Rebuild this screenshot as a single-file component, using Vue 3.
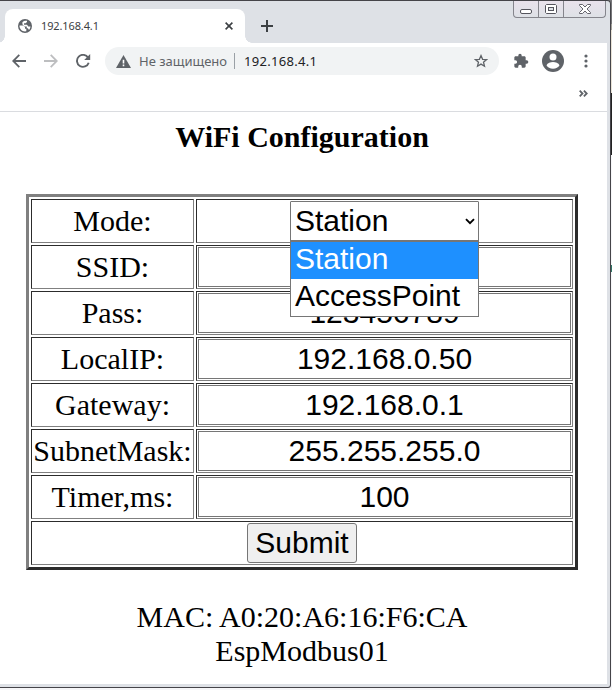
<script setup>
import { ref } from 'vue'

const fields = ref([
  { label: 'SSID:', value: '' },
  { label: 'Pass:', value: '123456789' },
  { label: 'LocalIP:', value: '192.168.0.50' },
  { label: 'Gateway:', value: '192.168.0.1' },
  { label: 'SubnetMask:', value: '255.255.255.0' },
  { label: 'Timer,ms:', value: '100' },
])
const modes = ['Station', 'AccessPoint']
const mode = ref('Station')
</script>

<template>
  <div class="screen">
    <div class="window">
      <div class="tabstrip">
        <div class="tab">
          <svg class="globe" width="14" height="14" viewBox="0 0 14 14">
            <circle cx="7" cy="7" r="7" fill="#5f6368" />
            <path d="M1.500 6.500H5.200L7 8.300V9.800H8.300V12.300C4.600 13 1.300 10.300 1.500 6.500Z M9 1.800V3L7.600 4.200H6V5.800H9L10.300 7.500H12.500C12.300 9 11.800 10 11 10.900L9.900 9.200H8.800V7.400H6.500L4.400 5.200V3.200C5.500 1.800 7.300 1.400 9 1.800Z" fill="#fff" />
          </svg>
          <span class="tab-title">192.168.4.1</span>
          <svg class="tab-close" width="8" height="8" viewBox="0 0 8 8"><path d="M.6.6L7.400 7.400M7.400.6L.6 7.400" stroke="#3c4043" stroke-width="1.600" /></svg>
        </div>
        <svg class="new-tab" width="12" height="12" viewBox="0 0 12 12"><path d="M6 0V12M0 6H12" stroke="#3c4043" stroke-width="2" /></svg>
        <div class="controls">
          <div class="control"><svg width="12" height="5"><rect x=".5" y=".5" width="11" height="4" rx="1.500" fill="#fff" stroke="#55555d" /></svg></div>
          <div class="control"><svg width="12" height="10"><path d="M1.500.5H10.500L11.500 1.500V8.500L10.500 9.500H1.500L.5 8.500V1.500Z" fill="#fff" stroke="#55555d" /><rect x="3.500" y="3.500" width="5" height="3" fill="#dee1e6" stroke="#55555d" /></svg></div>
          <div class="control wide"><svg width="12" height="10"><path d="M.5.5H3.500L6 3L8.500.5H11.500V1.500L8 5L11.500 8.500V9.500H8.500L6 7L3.500 9.500H.5V8.500L4 5L.5 1.500Z" fill="#fff" stroke="#55555d" stroke-width=".9" /></svg></div>
        </div>
      </div>

      <div class="toolbar">
        <svg class="back" width="14" height="14" viewBox="0 0 14 14"><path d="M14 7H1.500M7.300.9L1.200 7L7.300 13.100" fill="none" stroke="#5f6368" stroke-width="1.800" /></svg>
        <svg class="forward" width="14" height="14" viewBox="0 0 14 14"><path d="M0 7H12.500M6.700.9L12.800 7L6.700 13.100" fill="none" stroke="#bdbec0" stroke-width="1.800" /></svg>
        <svg class="reload" width="15" height="14" viewBox="0 0 15 14"><path d="M12.100 3.700A6 6 0 1 0 12.700 8.700" fill="none" stroke="#5f6368" stroke-width="1.900" /><path d="M14.200 0V6H8.200Z" fill="#5f6368" /></svg>
        <div class="omnibox">
          <svg class="warn" width="15" height="13" viewBox="0 0 15 13"><path d="M7.500 0L15 13H0Z" fill="#5f6368" /><path d="M7.500 4.800V8.500M7.500 9.500V11.200" stroke="#fff" stroke-width="1.600" /></svg>
          <span class="insecure">Не защищено</span>
          <i class="separator"></i>
          <span class="address">192.168.4.1</span>
          <svg class="star" width="14" height="14" viewBox="0 0 14 14"><path d="M7 1.600L8.600 5.300L12.600 5.600L9.500 8.200L10.500 12.200L7 10.100L3.500 12.200L4.500 8.200L1.400 5.600L5.400 5.300Z" fill="none" stroke="#5f6368" stroke-width="1.300" /></svg>
        </div>
        <svg class="puzzle" width="16" height="16" viewBox="0 0 24 24"><path fill="#5f6368" d="M20.500 11H19V7c0-1.100-.9-2-2-2h-4V3.500a2.500 2.500 0 0 0-5 0V5H4c-1.100 0-2 .9-2 2v3.800h1.500a2.700 2.700 0 0 1 0 5.400H2V20c0 1.100.9 2 2 2h3.800v-1.500a2.700 2.700 0 0 1 5.400 0V22H17c1.100 0 2-.9 2-2v-4h1.500a2.500 2.500 0 0 0 0-5z" /></svg>
        <svg class="profile" width="22" height="22" viewBox="0 0 22 22"><circle cx="11" cy="11" r="11" fill="#5f6368" /><circle cx="11" cy="7" r="3.500" fill="#fff" /><path d="M4.500 15.200C5.500 13 8.500 12.100 11 12.100S16.500 13 17.500 15.200C15.500 19.800 6.500 19.800 4.500 15.200Z" fill="#fff" /></svg>
        <svg class="menu" width="4" height="14" viewBox="0 0 4 14"><g fill="#5f6368"><circle cx="2" cy="2" r="1.600" /><circle cx="2" cy="7" r="1.600" /><circle cx="2" cy="12" r="1.600" /></g></svg>
      </div>

      <div class="bookmarks">
        <svg width="9" height="7" viewBox="0 0 9 7"><path d="M.7.700L3.500 3.500L.7 6.300M4.900.700L7.700 3.500L4.900 6.300" fill="none" stroke="#5f6368" stroke-width="1.800" /></svg>
      </div>

      <main class="page">
        <h1>WiFi Configuration</h1>
        <form class="config" @submit.prevent>
          <div class="cell label">Mode:</div>
          <div class="cell">
            <div class="select">
              <span>{{ mode }}</span>
              <svg width="10" height="7" viewBox="0 0 10 7"><path d="M1 1.200L5 5.200L9 1.200" fill="none" stroke="#000" stroke-width="1.900" /></svg>
              <div class="options">
                <div v-for="m in modes" :key="m" class="option" :class="{ selected: m === mode }">{{ m }}</div>
              </div>
            </div>
          </div>
          <template v-for="field in fields" :key="field.label">
            <div class="cell label">{{ field.label }}</div>
            <div class="cell"><input v-model="field.value" type="text" /></div>
          </template>
          <div class="cell full"><button type="submit">Submit</button></div>
        </form>
        <footer>
          <div>MAC: A0:20:A6:16:F6:CA</div>
          <div>EspModbus01</div>
        </footer>
      </main>
    </div>
  </div>
</template>

<style>
body { margin: 0; overflow: hidden; background: #fff; }
</style>

<style scoped>
* { box-sizing: border-box; }
svg { display: block; flex: none; }
.screen {
  width: 612px; height: 690px;
  background: linear-gradient(#77777a 0 24px, #a5a39c 24px 30px, #e8e2d6 30px 93px, #222 93px 155px, #f6f6f8 155px 265px, #2f7565 265px 272px, #f6f6f8 272px);
}
.window {
  width: 611px; height: 688px; display: flex; flex-direction: column;
  background: #dee1e6; border: solid #454449; border-width: 1px 1px 1px 0;
  border-radius: 0 4px 3px 0; padding: 0 3px 3px 0; overflow: hidden;
}
.tabstrip { height: 42px; flex: none; display: flex; align-items: flex-start; }
.tab {
  position: relative; width: 240px; height: 34px; margin: 8px 0 0 5px; padding: 0 12px 0 13px;
  display: flex; align-items: center; background: #fff; border-radius: 8px 8px 0 0;
}
.tab::before, .tab::after { content: ""; position: absolute; bottom: 0; width: 7px; height: 7px; }
.tab::before { left: -7px; background: radial-gradient(circle at 0 0, transparent 6.5px, #fff 7px); }
.tab::after { right: -7px; background: radial-gradient(circle at 100% 0, transparent 6.5px, #fff 7px); }
.tab-title { margin-left: 9px; flex: 1; font: 11px/16px "Noto Sans", sans-serif; letter-spacing: -.12px; color: #3c4043; }
.new-tab { margin: 19px 0 0 16px; }
.controls {
  height: 17px; margin-left: auto; margin-right: 1px; display: flex; border: 1px solid #85858c;
  border-top: 0; border-radius: 0 0 4px 4px; background: linear-gradient(#e9e2ec, #dee1e6);
}
.control { width: 25px; display: flex; align-items: center; justify-content: center; border-right: 1px solid #85858c; }
.control:first-child { padding-top: 5px; }
.control.wide { width: 41px; border-right: 0; }
.toolbar { height: 36px; flex: none; display: flex; align-items: center; padding-left: 12px; background: #fff; }
.forward { margin-left: 18px; }
.reload { margin-left: 18px; }
.omnibox { width: 394px; height: 28px; margin-left: 14px; border-radius: 14px; background: #f1f3f4; display: flex; align-items: center; padding: 0 11px; flex: none; }
.insecure, .address { font: 13px/18px "Noto Sans", sans-serif; white-space: nowrap; }
.insecure { width: 88px; margin-left: 8px; color: #5f6368; }
.separator { width: 1px; height: 16px; margin-left: 7px; background: #9aa0a6; }
.address { margin-left: 9px; color: #202124; letter-spacing: .3px; }
.star { margin-left: auto; }
.puzzle { margin-left: 14px; }
.profile { margin-left: 13px; }
.menu { margin-left: 20px; }
.bookmarks { height: 33px; flex: none; padding: 11px 19px 0 0; display: flex; justify-content: flex-end; background: #fff; border-bottom: 1px solid #dadce0; }
.page { flex: 1; background: #fff; font: 30px/34px "Liberation Serif", serif; color: #000; text-align: center; }
h1 { margin: 8px 3px 0 0; font: bold 30px/34px "Liberation Serif", serif; }
.config {
  width: 552px; margin: 40px 0 0 26px; padding: 2px; display: grid;
  grid-template-columns: 163px 377px; grid-auto-rows: 44px; gap: 2px;
  border: 3px solid; border-color: #808080 #2c2c2c #2c2c2c #808080;
}
.cell { padding: 1px; display: flex; align-items: center; justify-content: center; border: 1px solid; border-color: #2c2c2c #808080 #808080 #2c2c2c; }
.full { grid-column: 1 / 3; }
input {
  width: 100%; height: 40px; padding: 1px 2px; border: 1px solid #767676; border-radius: 0;
  background: #fff; font: 30px/34px "Liberation Sans", Arial, sans-serif; text-align: center; color: #000; outline: 0;
}
.select {
  position: relative; width: 189px; height: 40px; padding: 0 3px 0 4px; border: 1px solid #767676; border-radius: 1px;
  display: flex; align-items: center; justify-content: space-between; font: 30px/34px "Liberation Sans", Arial, sans-serif;
}
.options { position: absolute; z-index: 2; top: 38px; left: -1px; width: 189px; border: 1px solid #767676; border-top-width: 2px; background: #fff; text-align: left; }
.option { height: 37px; padding-left: 4px; line-height: 34px; }
.option.selected { background: #1e90ff; color: #fff; }
button { width: 110px; height: 40px; padding: 0; border: 1px solid #767676; border-radius: 3px; background: #efefef; font: 30px/34px "Liberation Sans", Arial, sans-serif; color: #000; }
footer { margin: 30px 3px 0 0; }
</style>
